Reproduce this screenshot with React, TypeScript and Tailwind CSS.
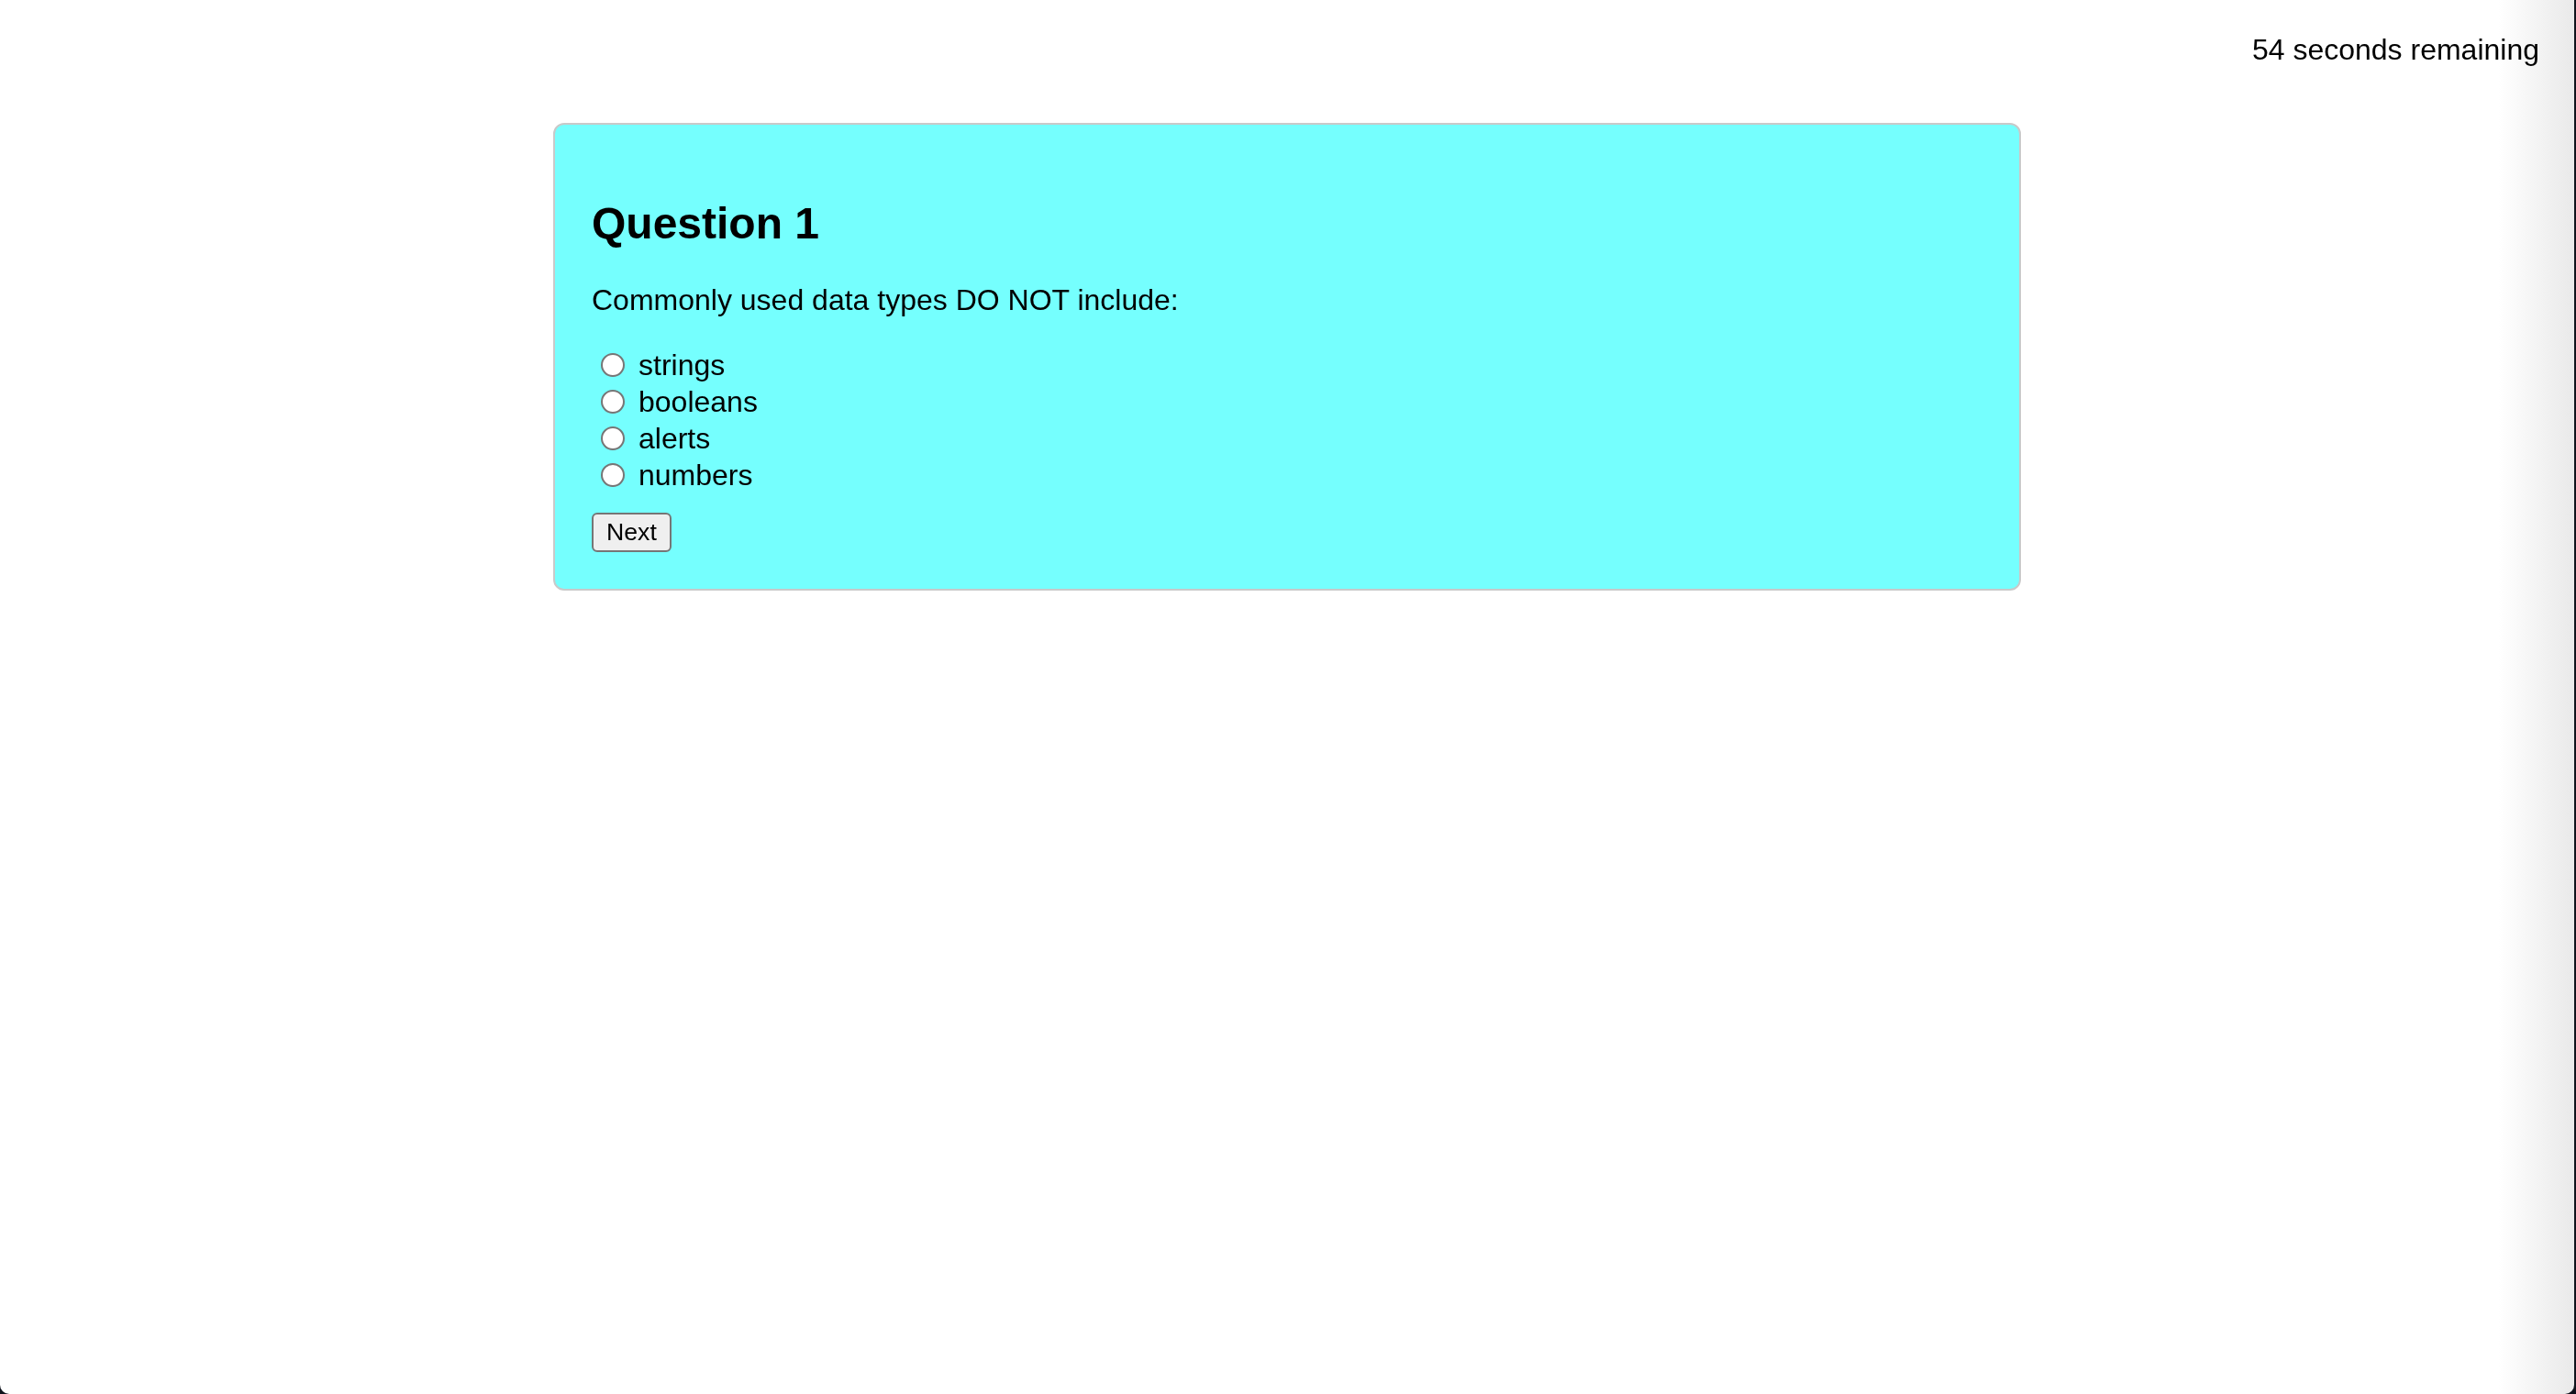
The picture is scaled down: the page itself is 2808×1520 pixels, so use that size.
const OPTIONS = ['strings', 'booleans', 'alerts', 'numbers']

function Choice({ label }: { label: string }) {
  return (
    <label className="flex h-[40px] items-center leading-[40px]">
      <span className="ml-[10px] mr-[15px] h-[26px] w-[26px] rounded-full border-2 border-[#767676] bg-white" />
      <span>{label}</span>
    </label>
  )
}

export default function App() {
  return (
    <div className="flex h-[1520px] w-[2808px] bg-[#0f131c] font-['Liberation_Sans',Arial,sans-serif] text-black">
      <div className="relative h-[1520px] w-[2806px] overflow-hidden rounded-b-[10px] bg-white">
        {/* Timer */}
        <div className="flex justify-end pr-[38px] pt-[36px] text-[32px] leading-[37px]">
          54 seconds remaining
        </div>

        {/* Question card */}
        <div className="mx-auto mt-[61px] w-[1600px] rounded-[12px] border-2 border-[#c9c9c9] bg-[#75fffe] px-[40px] pb-[40px] pt-[40px] text-[32px]">
          <h2 className="mt-[40px] text-[48px] font-bold leading-[55px]">Question 1</h2>
          <p className="mt-[38px] leading-[37px]">Commonly used data types DO NOT include:</p>
          <div className="mt-[32px] flex flex-col">
            {OPTIONS.map((o) => (
              <Choice key={o} label={o} />
            ))}
          </div>
          <button className="mt-[21px] rounded-[6px] border-2 border-[#767676] bg-[#efefef] px-[14px] py-[4px] text-[26.67px] leading-[30.7px]">
            Next
          </button>
        </div>

        {/* window edge shading */}
        <div className="pointer-events-none absolute bottom-0 right-0 top-0 w-[82px] bg-linear-to-r from-white to-[#e9e9e9] mix-blend-multiply" />
      </div>
    </div>
  )
}
